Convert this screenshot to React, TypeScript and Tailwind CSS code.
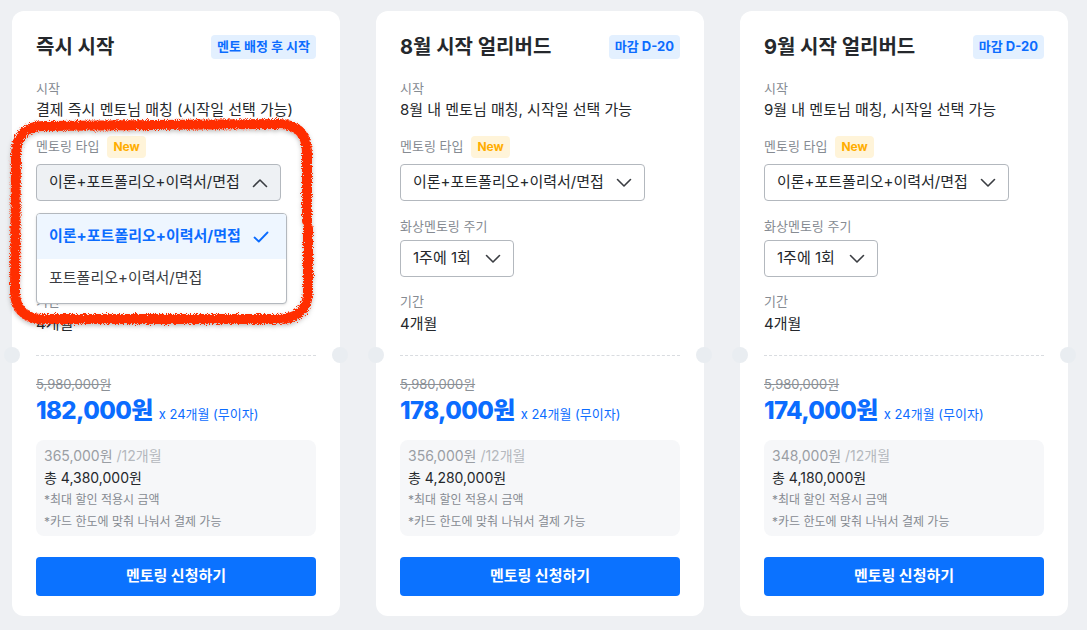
import React from 'react';

const FONT = { fontFamily: 'Inter, "Noto Sans CJK KR", sans-serif' };

const PLANS = [
  {
    id: 'now',
    title: '즉시 시작',
    badge: '멘토 배정 후 시작',
    start: '결제 즉시 멘토님 매칭 (시작일 선택 가능)',
    price: '182,000원',
    monthly: '365,000원',
    total: '총 4,380,000원',
    open: true,
  },
  {
    id: 'aug',
    title: '8월 시작 얼리버드',
    badge: '마감 D-20',
    start: '8월 내 멘토님 매칭, 시작일 선택 가능',
    price: '178,000원',
    monthly: '356,000원',
    total: '총 4,280,000원',
    open: false,
  },
  {
    id: 'sep',
    title: '9월 시작 얼리버드',
    badge: '마감 D-20',
    start: '9월 내 멘토님 매칭, 시작일 선택 가능',
    price: '174,000원',
    monthly: '348,000원',
    total: '총 4,180,000원',
    open: false,
  },
];

const Chevron = ({ up }: { up?: boolean }) => (
  <svg width="16" height="10" viewBox="0 0 16 10" fill="none" className="shrink-0">
    <path
      d={up ? 'M1.5 8.5 L8 2 L14.5 8.5' : 'M1.5 1.5 L8 8 L14.5 1.5'}
      stroke="#3a3d42"
      strokeWidth="1.6"
      strokeLinecap="round"
      strokeLinejoin="round"
    />
  </svg>
);

const Check = () => (
  <svg width="16" height="12" viewBox="0 0 16 12" fill="none">
    <path d="M1.5 6.5 L5.8 10.5 L14.5 1.5" stroke="#0b6cff" strokeWidth="1.8" strokeLinecap="round" strokeLinejoin="round" />
  </svg>
);

// hand-drawn red highlight around the open dropdown
const Scribble = () => (
  <svg
    className="absolute pointer-events-none"
    style={{ left: -10, top: 100 }}
    width="325"
    height="226"
    viewBox="0 0 325 226"
    fill="none"
  >
    <defs>
      <filter id="rough" x="-10%" y="-10%" width="120%" height="120%">
        <feTurbulence type="fractalNoise" baseFrequency="1.1" numOctaves="2" seed="5" result="n" />
        <feDisplacementMap in="SourceGraphic" in2="n" scale="6" result="d" />
        <feDropShadow dx="0" dy="2" stdDeviation="2" floodColor="#000" floodOpacity="0.25" />
      </filter>
    </defs>
    <path
      d="M305 110 L305 42 Q305 13 276 13 L42 15 Q14 15 14 44 L13 180 Q13 208 42 208 L276 208 Q306 208 306 180 L306 117"
      stroke="#ff2d00"
      strokeWidth="10"
      strokeLinecap="round"
      filter="url(#rough)"
    />
  </svg>
);

const Card = ({ plan }: { plan: (typeof PLANS)[number] }) => (
  <div className="relative w-[328px] shrink-0 rounded-xl bg-white px-6 pt-6 pb-5">
    <div className="flex h-6 items-center justify-between">
      <h2 className="text-[20px] font-bold text-[#25282c]">{plan.title}</h2>
      <span className="flex h-6 items-center rounded bg-[#e3f0ff] px-1.5 text-[13px] font-bold text-[#0b6cff]">
        {plan.badge}
      </span>
    </div>

    <p className="mt-[19px] text-[13px] leading-5 text-[#868b92]">시작</p>
    <p className="mt-px text-[15px] leading-[22px] text-[#25282c]">{plan.start}</p>

    <div className="mt-[15px] flex h-[22px] items-center gap-2">
      <span className="text-[13px] text-[#868b92]">멘토링 타입</span>
      <span className="flex h-[22px] items-center rounded bg-[#fff4d9] px-1.5 text-[12px] font-bold text-[#ffad00]">
        New
      </span>
    </div>
    <div className="relative mt-1.5">
      <div
        className={`flex h-[37px] w-[245px] items-center justify-between rounded border border-[#b3b8be] pl-3 pr-3 text-[15px] text-[#25282c] ${
          plan.open ? 'bg-[#eef1f4]' : 'bg-white'
        }`}
      >
        <span>이론+포트폴리오+이력서/면접</span>
        <Chevron up={plan.open} />
      </div>
      {plan.open && (
        <div className="absolute left-0 top-[49px] z-10 w-[251px] overflow-hidden rounded border border-[#b3b8be] bg-white shadow-sm">
          <div className="flex h-[45px] items-center justify-between bg-[#eef6ff] pl-3 pr-[17px] text-[15px] font-bold text-[#0b6cff]">
            <span>이론+포트폴리오+이력서/면접</span>
            <Check />
          </div>
          <div className="flex h-[44px] items-center pb-1.5 pl-3 text-[15px] text-[#3a3d42]">포트폴리오+이력서/면접</div>
        </div>
      )}
    </div>

    {/* covered by the open menu in the first card */}
    <div className={plan.open ? 'invisible' : ''}>
      <p className="mt-[15px] text-[13px] leading-5 text-[#868b92]">화상멘토링 주기</p>
      <div className="mt-1 flex h-[37px] w-[114px] items-center justify-between rounded border border-[#b3b8be] bg-white px-3 text-[15px] text-[#25282c]">
        <span>1주에 1회</span>
        <Chevron />
      </div>
    </div>

    <p className="mt-[14px] text-[13px] leading-5 text-[#868b92]">기간</p>
    <p className="mt-0.5 text-[15px] leading-[22px] text-[#25282c]">4개월</p>

    <div className="mt-5 border-t border-dashed border-[#d9dce0]" />

    <p className="mt-[19px] text-[13px] leading-[18px] text-[#8b9096] line-through">5,980,000원</p>
    <div className="flex h-[30px] items-baseline gap-1.5 text-[#0b6cff]">
      <span className="text-[24px] font-extrabold tracking-tight">{plan.price}</span>
      <span className="text-[13px]">x 24개월 (무이자)</span>
    </div>

    <div className="mt-[17px] rounded-lg bg-[#f6f7f9] px-2 pt-[5px] pb-[3px]">
      <p className="text-[14px] leading-[22px] text-[#9a9ea4]">
        {plan.monthly} <span className="text-[#b4b8bd]">/12개월</span>
      </p>
      <p className="text-[14px] leading-[22px] text-[#25282c]">{plan.total}</p>
      <p className="text-[12px] leading-[22px] text-[#868b92]">*최대 할인 적용시 금액</p>
      <p className="text-[12px] leading-[22px] text-[#868b92]">*카드 한도에 맞춰 나눠서 결제 가능</p>
    </div>

    <button className="mt-[21px] flex h-[39px] w-full items-center justify-center rounded bg-[#0b72ff] text-[15px] font-bold text-white">
      멘토링 신청하기
    </button>

    <span className="absolute -left-2 top-[336px] h-4 w-4 rounded-full bg-[#e9edf1]" />
    <span className="absolute -right-2 top-[336px] h-4 w-4 rounded-full bg-[#e9edf1]" />

    {plan.open && <Scribble />}
  </div>
);

export default function App() {
  return (
    <div className="min-h-[630px] bg-[#eef0f3] pl-3 pt-[11px]" style={FONT}>
      <div className="flex gap-9">
        {PLANS.map(plan => (
          <Card key={plan.id} plan={plan} />
        ))}
      </div>
    </div>
  );
}
